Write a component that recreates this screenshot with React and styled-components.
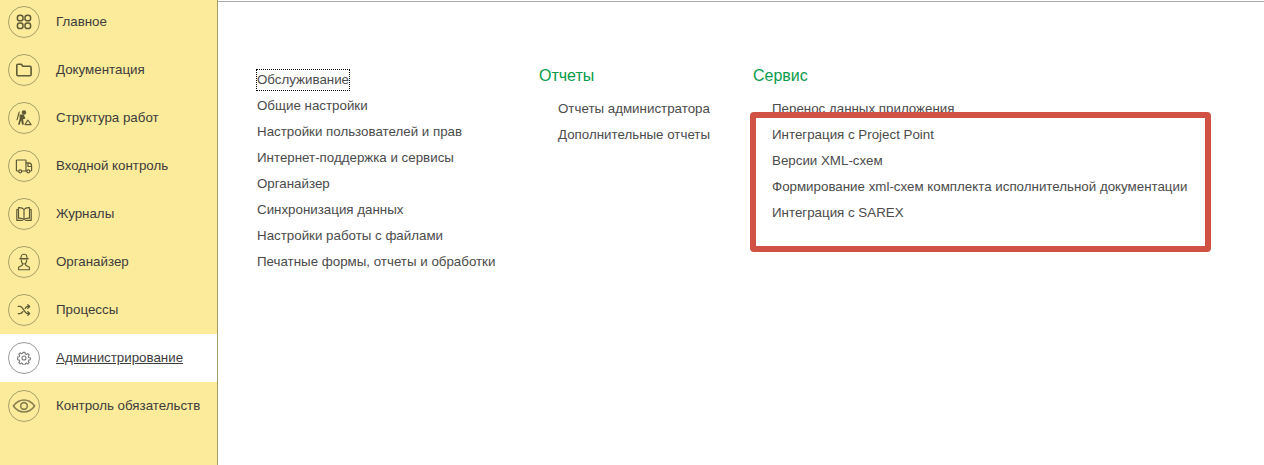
import React from "react";
import styled, { createGlobalStyle } from "styled-components";

const GlobalStyle = createGlobalStyle`
  html, body {
    margin: 0;
    padding: 0;
    height: 100%;
    background: #fff;
    overflow: hidden;
  }
  #root {
    height: 100%;
  }
`;

const Page = styled.div`
  display: flex;
  position: relative;
  width: 1264px;
  height: 465px;
  overflow: hidden;
  font-family: "Liberation Sans", Arial, sans-serif;
  font-size: 13.33px;
  color: #4b4b4b;
`;

const Sidebar = styled.nav`
  width: 217px;
  height: 465px;
  flex: none;
  background: #fbeb9b;
  border-right: 1px solid #a39b62;
  overflow: hidden;
`;

const NavList = styled.div`
  display: flex;
  flex-direction: column;
  margin-top: -2px;
`;

const NavRow = styled.div`
  display: flex;
  align-items: center;
  gap: 16px;
  height: 48px;
  padding-left: 8px;
  background: ${(p) => (p.$active ? "#fff" : "transparent")};
  color: #3d3d3d;
`;

const NavCircle = styled.span`
  display: flex;
  align-items: center;
  justify-content: center;
  width: 30px;
  height: 30px;
  flex: none;
  border: 1px solid ${(p) => (p.$active ? "#9a9a9a" : "#a89f6a")};
  border-radius: 50%;
  color: ${(p) => (p.$active ? "#7a7a7a" : "#5f5a36")};
`;

const NavLabel = styled.span`
  margin-top: -2px;
  text-decoration: ${(p) => (p.$active ? "underline" : "none")};
  white-space: nowrap;
`;

const Content = styled.main`
  flex: 1;
  border-top: 1px solid #a8a8a8;
  margin-top: 1px;
  display: flex;
  padding: 61px 0 0 39px;
`;

const Column = styled.section`
  width: ${(p) => p.$width}px;
  flex: none;
`;

const Heading = styled.h2`
  margin: 0;
  height: 26px;
  line-height: 26px;
  font-size: 16px;
  font-weight: normal;
  color: #0a9b4b;
`;

const LinkList = styled.div`
  display: flex;
  flex-direction: column;
  padding-left: ${(p) => p.$indent || 0}px;
  margin-top: ${(p) => p.$top || 0}px;
`;

const LinkItem = styled.a`
  height: 26px;
  line-height: 26px;
  white-space: nowrap;
  color: #4b4b4b;
`;

const Focused = styled.span`
  display: inline-block;
  height: 22px;
  line-height: 22px;
  margin-left: -1px;
  padding: 0 1px;
  outline: 1px dotted #000;
  outline-offset: -1px;
`;

const Highlight = styled.div`
  position: absolute;
  left: 750px;
  top: 112px;
  width: 449px;
  height: 128px;
  border: 6px solid #cf5245;
  border-radius: 4px;
`;

const Svg = styled.svg`
  display: block;
  fill: none;
  stroke: currentColor;
  stroke-width: ${(p) => p.$stroke || 1.3};
  stroke-linecap: round;
  stroke-linejoin: round;
`;

const Icon = ({ size = 18, stroke, children }) => (
  <Svg width={size} height={size} viewBox="0 0 18 18" $stroke={stroke}>
    {children}
  </Svg>
);

const GridIcon = () => (
  <Icon stroke={1.5}>
    <rect x="2.400" y="2.200" width="5.600" height="5.600" rx="2.400" />
    <rect x="10" y="2.200" width="5.600" height="5.600" rx="2.400" />
    <rect x="2.400" y="10" width="5.600" height="5.600" rx="2.400" />
    <rect x="10" y="10" width="5.600" height="5.600" rx="2.400" />
  </Icon>
);

const FolderIcon = () => (
  <Icon stroke={1.6}>
    <path d="M1.800 4.500a1.300 1.300 0 0 1 1.300-1.300h3.200l1.500 2h7a1.300 1.300 0 0 1 1.300 1.300v7a1.300 1.300 0 0 1-1.300 1.300H3.100a1.300 1.300 0 0 1-1.300-1.300z" />
  </Icon>
);

const WorkerIcon = () => (
  <Icon stroke={1.1}>
    <circle cx="9" cy="3.400" r="1.700" fill="currentColor" />
    <path d="M4.500 5.600h4.200l1.800 3.800-2.400.8.800 5.300-1.800.2-1-4.400-1.500 4.400H3l1.700-6.200z" fill="currentColor" stroke="none" />
    <path d="M4.200 3 2 10.800" />
    <path d="M10 15.600l2.800-4.600 3.300 4.600z" />
  </Icon>
);

const TruckIcon = () => (
  <Icon stroke={1.2}>
    <path d="M3.500 14H2.200a.8.8 0 0 1-.8-.8V3.800a.8.8 0 0 1 .8-.8h8a.8.8 0 0 1 .8.8V14H6.800" />
    <path d="M11 5.800h2.800c1.700 0 2.800 1.300 2.800 3.200v4.200a.8.800 0 0 1-.8.800h-.5M11 14h.6M13 6.200v3.300h3.400" />
    <circle cx="5.200" cy="14.300" r="1.500" />
    <circle cx="13.300" cy="14.300" r="1.500" />
  </Icon>
);

const BookIcon = () => (
  <Icon stroke={1.2}>
    <path d="M9 4.500C7.800 3 5.800 2.400 3.500 2.600v10.600c2.300-.2 4.300.3 5.500 1.500 1.200-1.200 3.200-1.700 5.500-1.500V2.600C12.200 2.400 10.200 3 9 4.500zM9 4.500v10.200" />
    <path d="M3.500 4.500H1.800v10.900h5.500M14.500 4.500h1.700v10.900h-5.500" />
  </Icon>
);

const EngineerIcon = () => (
  <Icon stroke={1.1}>
    <path d="M6 5.600V4.300a3 3 0 0 1 6 0v1.300" />
    <path d="M5 5.800h8" strokeWidth="1.500" />
    <path d="M6.300 7.400c.2 2.300 1.300 3.600 2.700 3.600s2.500-1.300 2.700-3.600" />
    <path d="M7.300 11v1.300L3.600 14.200v2.600h10.800v-2.600l-3.700-1.900V11" />
  </Icon>
);

const ShuffleIcon = () => (
  <Icon size={16} stroke={1.5}>
    <path d="M2.500 5h2c3.500 0 5 8 8.500 8h2M2.500 13h2c1.300 0 2.300-1 3.200-2.300M10.300 7.300C11 6 12 5 13.500 5h1.500" />
    <path d="M13.300 3l2 2-2 2M13.300 11l2 2-2 2" />
  </Icon>
);

const GearIcon = () => (
  <Icon size={14} stroke={1.4}>
    <circle cx="9" cy="9" r="2.600" />
    <path d="M7.700 1.800h2.600l.4 2.100 1.400.6 1.800-1.200 1.800 1.800-1.200 1.800.6 1.400 2.100.4v2.600l-2.100.4-.6 1.400 1.200 1.800-1.800 1.800-1.800-1.200-1.400.6-.4 2.100H7.700l-.4-2.100-1.400-.6-1.800 1.200-1.800-1.800 1.200-1.800-.6-1.400-2.100-.4V7.700l2.100-.4.6-1.400-1.200-1.800 1.800-1.800 1.800 1.200 1.400-.6z" />
  </Icon>
);

const EyeIcon = () => (
  <Icon size={24} stroke={1.2}>
    <g stroke="#87804f">
      <path d="M1 9c2.200-3 4.800-4.500 8-4.500s5.800 1.500 8 4.500c-2.200 3-4.800 4.500-8 4.500S3.200 12 1 9z" />
      <circle cx="9" cy="9" r="2.500" />
    </g>
  </Icon>
);

const navItems = [
  { label: "Главное", icon: <GridIcon /> },
  { label: "Документация", icon: <FolderIcon /> },
  { label: "Структура работ", icon: <WorkerIcon /> },
  { label: "Входной контроль", icon: <TruckIcon /> },
  { label: "Журналы", icon: <BookIcon /> },
  { label: "Органайзер", icon: <EngineerIcon /> },
  { label: "Процессы", icon: <ShuffleIcon /> },
  { label: "Администрирование", icon: <GearIcon />, active: true },
  { label: "Контроль обязательств", icon: <EyeIcon /> },
];

const serviceLinks = [
  "Обслуживание",
  "Общие настройки",
  "Настройки пользователей и прав",
  "Интернет-поддержка и сервисы",
  "Органайзер",
  "Синхронизация данных",
  "Настройки работы с файлами",
  "Печатные формы, отчеты и обработки",
];

const reportLinks = ["Отчеты администратора", "Дополнительные отчеты"];

const toolLinks = [
  "Перенос данных приложения",
  "Интеграция с Project Point",
  "Версии XML-схем",
  "Формирование xml-схем комплекта исполнительной документации",
  "Интеграция с SAREX",
];

export default function App() {
  return (
    <Page>
      <GlobalStyle />
      <Sidebar>
        <NavList>
          {navItems.map((item) => (
            <NavRow key={item.label} $active={item.active}>
              <NavCircle $active={item.active}>{item.icon}</NavCircle>
              <NavLabel $active={item.active}>{item.label}</NavLabel>
            </NavRow>
          ))}
        </NavList>
      </Sidebar>
      <Content>
        <Column $width={282}>
          <LinkList $top={4}>
            {serviceLinks.map((text, i) => (
              <LinkItem key={text}>
                {i === 0 ? <Focused>{text}</Focused> : text}
              </LinkItem>
            ))}
          </LinkList>
        </Column>
        <Column $width={214}>
          <Heading>Отчеты</Heading>
          <LinkList $indent={19} $top={7}>
            {reportLinks.map((text) => (
              <LinkItem key={text}>{text}</LinkItem>
            ))}
          </LinkList>
        </Column>
        <Column $width={470}>
          <Heading>Сервис</Heading>
          <LinkList $indent={19} $top={7}>
            {toolLinks.map((text) => (
              <LinkItem key={text}>{text}</LinkItem>
            ))}
          </LinkList>
        </Column>
      </Content>
      <Highlight />
    </Page>
  );
}
